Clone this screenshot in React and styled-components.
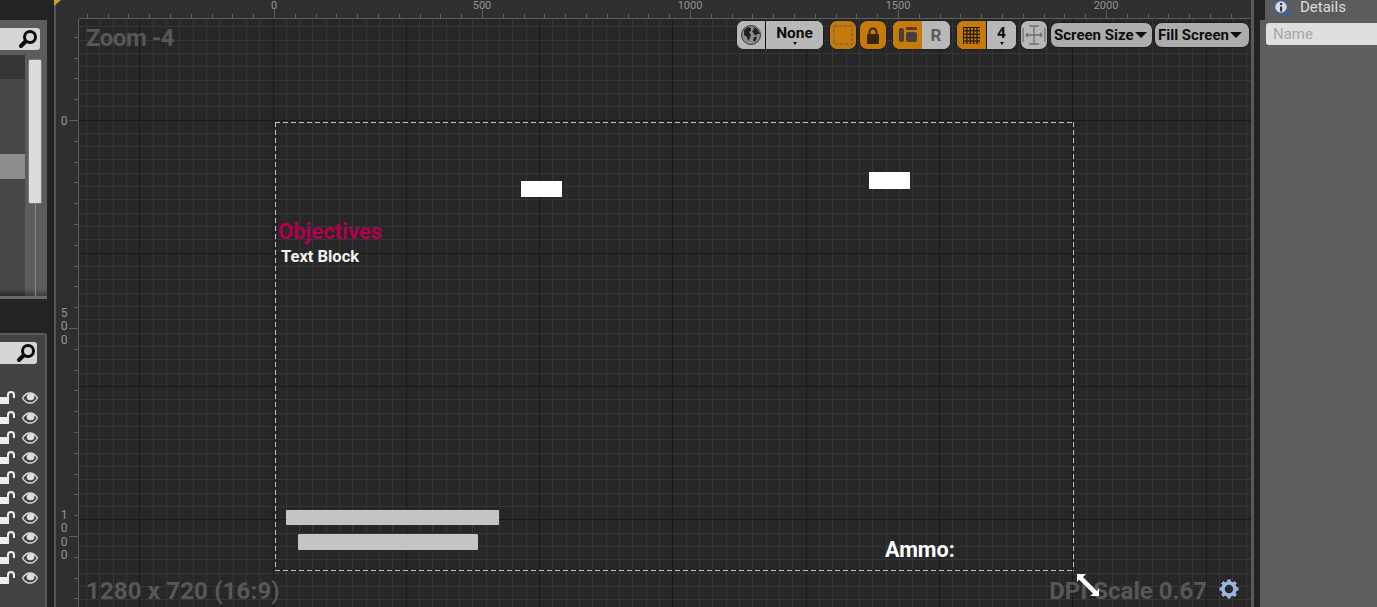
import React from 'react';
import styled, { createGlobalStyle } from 'styled-components';

const Global = createGlobalStyle`
  html, body { margin: 0; padding: 0; height: 100%; overflow: hidden; background: #232323; }
  #root { height: 100%; }
  * { box-sizing: border-box; }
`;

const Page = styled.div`
  width: 1377px;
  height: 607px;
  display: flex;
  overflow: hidden;
  font-family: Roboto, "Liberation Sans", sans-serif;
`;

/* left column */
const LeftColumn = styled.div`
  width: 54px;
  height: 607px;
  flex: none;
  background: #232323;
  padding: 20px 7px 0 0;
  display: flex;
  flex-direction: column;
  overflow: hidden;
`;
const HierarchyPanel = styled.div`
  height: 279px;
  flex: none;
  background: #5c5c5c;
  border-bottom: 3px solid #6a6a6a;
  padding-top: 8px;
  display: flex;
  flex-direction: column;
`;
const SearchBox = styled.div`
  height: 22px;
  width: ${p => p.$w}px;
  flex: none;
  background: #d6d6d6;
  border-radius: 0 3px 3px 0;
  display: flex;
  align-items: center;
  justify-content: flex-end;
  padding-right: ${p => p.$pad}px;
`;
const ListBody = styled.div`
  flex: 1;
  display: flex;
  min-height: 0;
  margin-top: 5px;
`;
const Rows = styled.div`
  width: 25px;
  flex: none;
  display: flex;
  flex-direction: column;
  background: linear-gradient(to top, #2a2a2a, #474747 7px);
`;
const TreeRow = styled.div`
  height: ${p => p.$h}px;
  flex: none;
  background: ${p => p.$bg};
`;
const Scroll = styled.div`
  flex: 1;
  padding: 4px 0 0 3px;
  display: flex;
  flex-direction: column;
  background: linear-gradient(to top, #3c3c3c, #5c5c5c 7px);
`;
const ScrollThumb = styled.div`
  width: 14px;
  height: 145px;
  flex: none;
  background: #dcdcdc;
  border: 1px solid #7a7a7a;
  border-radius: 2px;
`;
const ScrollTrack = styled.div`
  flex: 1;
  width: 1px;
  margin-left: 7px;
  background: #8a8a8a;
`;
const Gap = styled.div`
  height: 34px;
  flex: none;
`;
const LayersPanel = styled.div`
  flex: 1;
  background: #434343;
  border: 2px solid #5b5b5b;
  border-left: none;
  border-bottom: none;
  border-radius: 0 3px 0 0;
  padding-top: 7px;
`;
const LayerRows = styled.div`
  margin-top: 24px;
  display: flex;
  flex-direction: column;
`;
const LayerRow = styled.div`
  height: 20px;
  display: flex;
  align-items: center;
  gap: 7px;
`;

/* viewport */
const Viewport = styled.div`
  width: 1200px;
  height: 607px;
  flex: none;
  display: grid;
  grid-template-columns: 23px 1fr;
  grid-template-rows: 19px 1fr;
  background: #2f2f2f;
  border-left: 2px solid #555;
  border-right: 3px solid #595959;
`;
const Corner = styled.div`
  position: relative;
`;
const Notch = styled.div`
  position: absolute;
  top: 0;
  left: -2px;
  width: 0;
  height: 0;
  border-top: 6px solid #c9a227;
  border-right: 7px solid transparent;
`;
const TopRuler = styled.div`
  position: relative;
  overflow: hidden;
  border-bottom: 1px solid #5e5e5e;
`;
const LeftRuler = styled.div`
  position: relative;
  overflow: hidden;
  border-right: 1px solid #5e5e5e;
`;
const RulerTicks = styled.svg`
  position: absolute;
  display: block;
  ${p => (p.$side === 'top' ? 'left: 0; bottom: 0;' : 'top: 0; right: 0;')}
`;
const RulerLabel = styled.span`
  position: absolute;
  font-size: 11px;
  color: #959595;
`;
const HTick = styled(RulerLabel)`
  top: 0;
  line-height: 12px;
  transform: translateX(-50%);
`;
const VTick = styled(RulerLabel)`
  left: 4px;
  width: 8px;
  font-size: 12px;
  text-align: center;
  word-break: break-all;
  line-height: 13.4px;
`;
const Canvas = styled.div`
  position: relative;
  overflow: hidden;
  background-color: #272727;
`;
const GridLines = styled.svg`
  position: absolute;
  left: 0;
  top: 0;
  display: block;
`;
const Overlay = styled.div`
  position: absolute;
  font-weight: 700;
  font-size: 24px;
  line-height: 30px;
  letter-spacing: ${p => p.$ls || 0}px;
  color: #575757;
  white-space: nowrap;
`;
const SafeZone = styled.div`
  position: absolute;
  left: 196px;
  top: 103px;
  width: 799px;
  height: 449px;
  background-image:
    linear-gradient(to right, #c4c4c4 5px, transparent 5px),
    linear-gradient(to right, #c4c4c4 5px, transparent 5px),
    linear-gradient(to bottom, #c4c4c4 5px, transparent 5px),
    linear-gradient(to bottom, #c4c4c4 5px, transparent 5px);
  background-size: 8px 1px, 8px 1px, 1px 8px, 1px 8px;
  background-repeat: repeat-x, repeat-x, repeat-y, repeat-y;
  background-position: left top, left bottom, left top, right top;
`;
const Bar = styled.div`
  position: absolute;
  left: ${p => p.$x}px;
  top: ${p => p.$y}px;
  width: ${p => p.$w}px;
  height: ${p => p.$h}px;
  background: ${p => p.$bg};
  border-radius: ${p => p.$r || 0}px;
`;
const Label = styled.div`
  position: absolute;
  left: ${p => p.$x}px;
  top: ${p => p.$y}px;
  font-weight: ${p => p.$weight};
  font-size: ${p => p.$size}px;
  line-height: ${p => Math.round(p.$size) + 4}px;
  color: ${p => p.$color};
  white-space: nowrap;
`;
const Floating = styled.div`
  position: absolute;
  left: ${p => p.$x}px;
  top: ${p => p.$y}px;
  display: flex;
`;

/* toolbar */
const Toolbar = styled.div`
  position: absolute;
  top: 1px;
  right: 1px;
  height: 30px;
  display: flex;
  align-items: center;
`;
const Group = styled.div`
  display: flex;
  height: 30px;
  margin-left: ${p => p.$ml || 0}px;
  border-radius: 8px;
  overflow: hidden;
  background: #b8b8b8;
  border: 1px solid #1e1e1e;
`;
const Seg = styled.div`
  width: ${p => p.$w}px;
  background: ${p => (p.$on ? '#c67a08' : '#b8b8b8')};
  border-right: ${p => (p.$div ? '1px solid #111' : 'none')};
  display: flex;
  flex-direction: column;
  align-items: center;
  justify-content: center;
  color: #0c0c0c;
  font-weight: 700;
  font-size: 15.500px;
  line-height: 16px;
`;
const Caret = styled.span`
  width: 0;
  height: 0;
  border-left: 2.500px solid transparent;
  border-right: 2.500px solid transparent;
  border-top: 3px solid #0c0c0c;
  margin-top: 1px;
`;
const Dropdown = styled.div`
  width: ${p => p.$w}px;
  height: 26px;
  margin-left: ${p => p.$ml}px;
  padding-left: 3px;
  border-radius: 8px;
  background: #adadad;
  border: 1px solid #1e1e1e;
  display: flex;
  align-items: center;
  gap: 1px;
  color: #0c0c0c;
  font-weight: 700;
  font-size: 15px;
  white-space: nowrap;
`;
const DropCaret = styled.span`
  width: 0;
  height: 0;
  border-left: 6px solid transparent;
  border-right: 6px solid transparent;
  border-top: 6px solid #0c0c0c;
`;
const RLetter = styled.span`
  color: #5a5a5a;
  font-size: 17px;
`;

/* details */
const Details = styled.div`
  flex: 1;
  background: #232323;
  padding-left: 6px;
  display: flex;
  flex-direction: column;
`;
const DetailsHead = styled.div`
  height: 20px;
  flex: none;
  margin-left: 5px;
  padding-left: 8px;
  display: flex;
  align-items: flex-start;
  gap: 7px;
  background: #5c5c5c;
  color: #dedede;
  font-size: 15px;
`;
const DetailsTitle = styled.span`
  line-height: 14px;
`;
const DetailsBody = styled.div`
  flex: 1;
  background: #5e5e5e;
  padding: 3px 0 0 6px;
`;
const NameBox = styled.div`
  height: 22px;
  background: #dedede;
  border-radius: 3px 0 0 3px;
  padding-left: 7px;
  color: #a6a6a6;
  font-size: 15px;
  line-height: 22px;
`;

const Magnifier = () => (
  <svg width="20" height="20" viewBox="0 0 20 20">
    <circle cx="12" cy="8" r="5.500" fill="none" stroke="#0a0a0a" strokeWidth="3" />
    <line x1="7.500" y1="12.500" x2="3" y2="17" stroke="#0a0a0a" strokeWidth="4" strokeLinecap="round" />
  </svg>
);
const OpenLock = () => (
  <svg width="15" height="14" viewBox="0 0 15 14">
    <rect x="0" y="6" width="9" height="7" fill="#ededed" />
    <path d="M8 6V4a3 3 0 0 1 6 0v3" fill="none" stroke="#ededed" strokeWidth="2" />
  </svg>
);
const Eye = () => (
  <svg width="16" height="12" viewBox="0 0 16 12">
    <path d="M.5 6C3 2 5.500 1 8 1s5 1 7.500 5c-2.500 4-5 5-7.500 5S3 10 .5 6z" fill="none" stroke="#e0e0e0" strokeWidth="1.300" />
    <ellipse cx="8.500" cy="5" rx="3.800" ry="3.200" fill="#e0e0e0" />
  </svg>
);
const GlobeIcon = () => (
  <svg width="20" height="20" viewBox="0 0 20 20">
    <circle cx="10" cy="10" r="9.500" fill="#8c8c8c" stroke="#3a3a3a" />
    <path d="M3 5l4-3 3 1 0 3-2 1 2 3-1 3-2 3-1-4-3-2zM12 2l4 2 3 5-3 0-1 2-2-2-2-3 2-1zM13 12l3 0-2 5-2-2z" fill="#1f1f1f" />
  </svg>
);
const MarqueeIcon = () => (
  <svg width="20" height="20" viewBox="0 0 20 20">
    <rect x="1" y="1" width="18" height="18" fill="#c67a08" stroke="#7d6a50" strokeWidth="1.500" strokeDasharray="3.500 1.500" />
  </svg>
);
const LockIcon = () => (
  <svg width="14" height="17" viewBox="0 0 14 17">
    <rect x="1" y="7" width="12" height="10" rx="1" fill="#3a2408" />
    <path d="M3.500 7V5a3.500 3.500 0 0 1 7 0v2" fill="none" stroke="#3a2408" strokeWidth="2" />
  </svg>
);
const AnchorsIcon = () => (
  <svg width="18" height="16" viewBox="0 0 18 16">
    <rect x="0" y="1" width="5" height="14" rx="2" fill="#4a4038" />
    <rect x="7" y="0" width="11" height="3" rx="1" fill="#4a4038" />
    <rect x="7" y="5" width="11" height="10" rx="2" fill="#4a4038" />
  </svg>
);
const GridIcon = () => (
  <svg width="17" height="17" viewBox="0 0 17 17">
    <rect width="17" height="17" fill="#1d1408" />
    {[1, 4.400, 7.800, 11.200, 14.600].map(x =>
      [1, 4.400, 7.800, 11.200, 14.600].map(y => (
        <rect key={`${x}-${y}`} x={x} y={y} width="2.200" height="2.200" fill="#c67a08" />
      ))
    )}
  </svg>
);
const FitIcon = () => (
  <svg width="24" height="22" viewBox="0 0 24 22" fill="none" stroke="#6e6e6e" strokeWidth="1.300">
    <path d="M1 4v14M23 4v14M4 11h16M12 3v16M7 2h10M7 20h10M6 9l-2 2 2 2M18 9l2 2-2 2" />
  </svg>
);
const GearIcon = () => (
  <svg width="20" height="20" viewBox="0 0 20 20">
    <circle cx="10" cy="10" r="6" fill="none" stroke="#9fb4e6" strokeWidth="3.500" />
    {[0, 45, 90, 135, 180, 225, 270, 315].map(a => (
      <rect key={a} x="8.300" y="0.500" width="3.400" height="4" fill="#9fb4e6" transform={`rotate(${a} 10 10)`} />
    ))}
  </svg>
);
const ResizeCursor = () => (
  <svg width="24" height="24" viewBox="0 0 24 24">
    <path d="M1 1h9L7 4l14 14 2-3v8h-9l3-2.500L3 6.500 1 9z" fill="#fff" />
  </svg>
);
const InfoIcon = () => (
  <svg width="20" height="18" viewBox="0 0 20 18">
    <circle cx="8" cy="7" r="6.500" fill="#d8d8d8" stroke="#3b5fa8" strokeWidth="1.500" />
    <rect x="7" y="6.500" width="2.200" height="5" fill="#333" />
    <rect x="7" y="3" width="2.200" height="2" fill="#333" />
    <line x1="12.500" y1="12" x2="19" y2="16.500" stroke="#3b5fa8" strokeWidth="2.500" />
  </svg>
);

// canvas is at (79,19) on the page, grid origin at (273,120)
const CANVAS_W = 1172;
const CANVAS_H = 588;
const gridPath = (step, skipMajor) => {
  let d = '';
  for (let k = -30; k < 150; k++) {
    if (skipMajor && k % 10 === 0) continue;
    const x = Math.floor(273 + k * step) - 79;
    const y = Math.floor(120 + k * step) - 19;
    if (x >= 0 && x < CANVAS_W) d += `M${x + 0.5} 0V${CANVAS_H}`;
    if (y >= 0 && y < CANVAS_H) d += `M0 ${y + 0.5}H${CANVAS_W}`;
  }
  return d;
};
const minorGrid = gridPath(13.3333, true);
const majorGrid = gridPath(133.333, false);

const topTicks = Array.from({ length: 57 }, (_, i) => i - 9);
const leftTicks = Array.from({ length: 29 }, (_, i) => i - 4);

const hLabels = [[0, 195], [500, 403], [1000, 611], [1500, 819], [2000, 1027]];
const vLabels = [[0, 96], [500, 288], [1000, 490]];
const treeRows = [[24, '#353535'], [75, '#474747'], [25, '#8c8c8c']];

export default function App() {
  return (
    <Page>
      <Global />
      <LeftColumn>
        <HierarchyPanel>
          <SearchBox $w={40} $pad={2}><Magnifier /></SearchBox>
          <ListBody>
            <Rows>
              {treeRows.map(([h, bg], i) => <TreeRow key={i} $h={h} $bg={bg} />)}
            </Rows>
            <Scroll>
              <ScrollThumb />
              <ScrollTrack />
            </Scroll>
          </ListBody>
        </HierarchyPanel>
        <Gap />
        <LayersPanel>
          <SearchBox $w={37} $pad={1}><Magnifier /></SearchBox>
          <LayerRows>
            {Array.from({ length: 10 }).map((_, i) => (
              <LayerRow key={i}><OpenLock /><Eye /></LayerRow>
            ))}
          </LayerRows>
        </LayersPanel>
      </LeftColumn>

      <Viewport>
        <Corner><Notch /></Corner>
        <TopRuler>
          <RulerTicks $side="top" width={CANVAS_W} height="8">
            {topTicks.map(k => {
              const x = Math.round(195 + k * 20.8) + 0.5;
              return <line key={k} x1={x} x2={x} y1={k % 10 === 0 ? 0 : 4} y2="8" stroke="#5e5e5e" />;
            })}
          </RulerTicks>
          {hLabels.map(([t, x]) => <HTick key={t} style={{ left: x }}>{t}</HTick>)}
        </TopRuler>
        <LeftRuler>
          <RulerTicks $side="left" width="10" height={CANVAS_H}>
            {leftTicks.map(k => {
              const y = Math.round(101 + k * 20.8) + 0.5;
              return <line key={k} y1={y} y2={y} x1={k % 10 === 0 ? 1 : 6} x2="10" stroke="#5e5e5e" />;
            })}
          </RulerTicks>
          {vLabels.map(([t, y]) => <VTick key={t} style={{ top: y }}>{t}</VTick>)}
        </LeftRuler>
        <Canvas>
          <GridLines width={CANVAS_W} height={CANVAS_H}>
            <path d={minorGrid} stroke="#353535" fill="none" />
            <path d={majorGrid} stroke="#1a1a1a" fill="none" />
          </GridLines>
          <SafeZone />
          <Overlay $ls={-0.5} style={{ left: 7, top: 4 }}>Zoom -4</Overlay>
          <Overlay $ls={0.15} style={{ left: 7, top: 557 }}>1280 x 720 (16:9)</Overlay>
          <Overlay style={{ right: 44, top: 557 }}>DPI Scale 0.67</Overlay>
          <Bar $x={442} $y={162} $w={41} $h={16} $bg="#fff" />
          <Bar $x={790} $y={153} $w={41} $h={17} $bg="#fff" />
          <Bar $x={207} $y={491} $w={213} $h={15} $r={1} $bg="#c4c4c4" />
          <Bar $x={219} $y={515} $w={180} $h={16} $r={1} $bg="#c4c4c4" />
          <Label $x={199} $y={200} $size={22} $weight={700} $color="#b0004e">Objectives</Label>
          <Label $x={202} $y={227} $size={16.500} $weight={700} $color="#f2f2f2">Text Block</Label>
          <Label $x={806} $y={518} $size={21.600} $weight={700} $color="#fff">Ammo:</Label>
          <Floating $x={997} $y={554}><ResizeCursor /></Floating>
          <Floating $x={1140} $y={560}><GearIcon /></Floating>
          <Toolbar>
            <Group>
              <Seg $w={29} $div><GlobeIcon /></Seg>
              <Seg $w={57}>None<Caret /></Seg>
            </Group>
            <Group $ml={5}>
              <Seg $w={26} $on><MarqueeIcon /></Seg>
            </Group>
            <Group $ml={2}>
              <Seg $w={26} $on><LockIcon /></Seg>
            </Group>
            <Group $ml={5}>
              <Seg $w={29} $on><AnchorsIcon /></Seg>
              <Seg $w={28}><RLetter>R</RLetter></Seg>
            </Group>
            <Group $ml={5}>
              <Seg $w={30} $on $div><GridIcon /></Seg>
              <Seg $w={29}>4<Caret /></Seg>
            </Group>
            <Group $ml={3}>
              <Seg $w={26}><FitIcon /></Seg>
            </Group>
            <Dropdown $w={103} $ml={2}>Screen Size<DropCaret /></Dropdown>
            <Dropdown $w={96} $ml={1}>Fill Screen<DropCaret /></Dropdown>
          </Toolbar>
        </Canvas>
      </Viewport>

      <Details>
        <DetailsHead><InfoIcon /><DetailsTitle>Details</DetailsTitle></DetailsHead>
        <DetailsBody><NameBox>Name</NameBox></DetailsBody>
      </Details>
    </Page>
  );
}
